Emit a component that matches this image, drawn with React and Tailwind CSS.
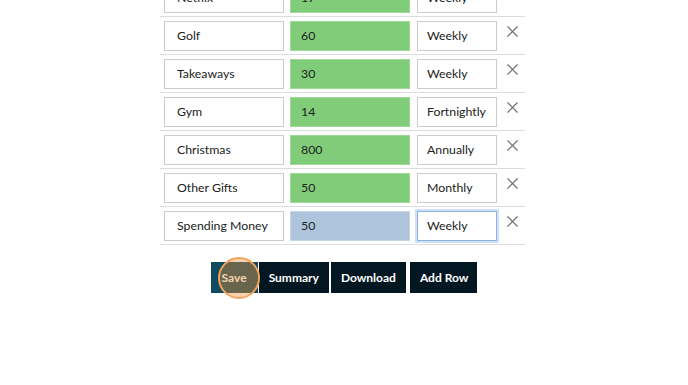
import { X } from "lucide-react"

const rows = [
  { name: "Netflix", amount: "17", freq: "Weekly" },
  { name: "Golf", amount: "60", freq: "Weekly" },
  { name: "Takeaways", amount: "30", freq: "Weekly" },
  { name: "Gym", amount: "14", freq: "Fortnightly" },
  { name: "Christmas", amount: "800", freq: "Annually" },
  { name: "Other Gifts", amount: "50", freq: "Monthly" },
  { name: "Spending Money", amount: "50", freq: "Weekly", active: true },
]

function Row({ row }) {
  return (
    <div className="flex items-start border-b border-[#dcdcdc] pl-1 pt-1 h-[38px] whitespace-nowrap text-[12.3px] text-[#222]">
      <div className="w-[120px] h-[30px] border border-[#cccccc] bg-white px-[12px] flex items-center">
        {row.name}
      </div>
      <div
        className={
          "ml-[6px] w-[120px] h-[30px] border px-[10px] flex items-center " +
          (row.active ? "bg-[#adc4dc] border-[#c9d6e3]" : "bg-[#80cc78] border-[#9fd89a]")
        }
      >
        {row.amount}
      </div>
      <div
        className={
          "ml-[7px] w-[80px] h-[30px] bg-white px-[9px] flex items-center " +
          (row.active ? "border border-[#8fb3e0] ring-2 ring-[#cfe0f7]" : "border border-[#cccccc]")
        }
      >
        {row.freq}
      </div>
      <div className="ml-[6px] pt-[1px] text-[#6e6e6e]">
        <X size={19} strokeWidth={1.4} />
      </div>
    </div>
  )
}

export default function App() {
  return (
    <div className="w-[688px] h-[385px] overflow-hidden bg-white font-['Lato',sans-serif]">
      <div className="w-[365px] ml-[160px] -mt-[21px]">
        {rows.map((row) => (
          <Row key={row.name} row={row} />
        ))}
      </div>
      <div className="flex justify-center mt-[17px] text-[12px] font-bold text-white">
        <div className="relative">
          <button className="h-[31px] px-[11px] bg-[#0f4a5e]">Save</button>
          <span className="absolute left-[7px] top-[-5px] w-[42px] h-[42px] rounded-full bg-[rgba(240,140,50,0.4)] border-2 border-[#f3a35e] pointer-events-none"></span>
        </div>
        <button className="ml-[1px] h-[31px] px-[10px] bg-[#031722]">Summary</button>
        <button className="ml-[2px] h-[31px] px-[10px] bg-[#031722]">Download</button>
        <button className="ml-[4px] h-[31px] pl-[10px] pr-[9px] bg-[#031722]">Add Row</button>
      </div>
    </div>
  )
}
